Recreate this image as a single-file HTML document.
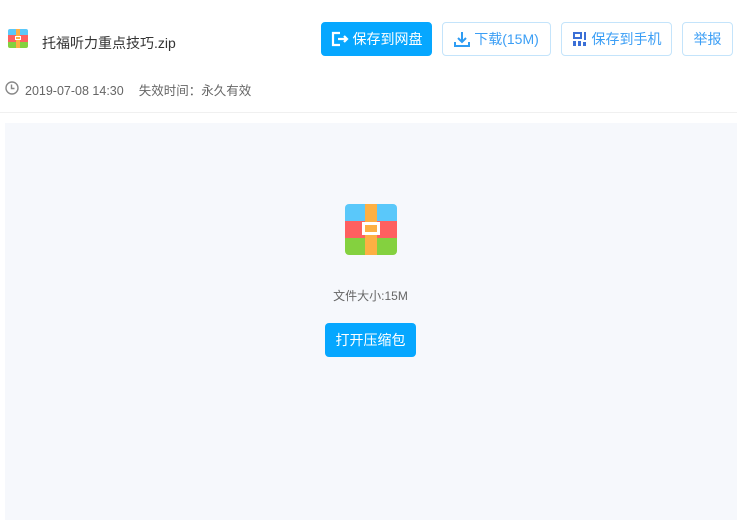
<!DOCTYPE html><html><head><meta charset="utf-8"><style>
*{margin:0;padding:0;box-sizing:border-box}
body{width:737px;height:520px;background:#fff;font-family:"Liberation Sans","Noto Sans CJK SC",sans-serif;position:relative;overflow:hidden}
.a{position:absolute}
.btn{position:absolute;top:22px;height:34px;border:1px solid #c4e4fb;border-radius:4px;color:#3b9ef5;font-size:14px;display:flex;align-items:center;justify-content:center;gap:4px;background:#fff}
</style></head><body>
<div class="a" style="left:8px;top:29px;width:20px;height:19px;border-radius:2px;overflow:hidden">
<div style="height:6px;background:#5ac8fa"></div><div style="height:7px;background:#fe6060"></div><div style="height:6px;background:#84d13f"></div>
<div class="a" style="left:8px;top:0;width:4px;height:19px;background:#fdb043"></div>
<div class="a" style="left:7px;top:7px;width:6px;height:4px;border:1px solid #fff"></div></div>
<div class="a" style="left:42px;top:33px;font-size:14px;color:#333">托福听力重点技巧.zip</div>
<div class="btn" style="left:321px;width:111px;background:#06a7ff;border-color:#06a7ff;color:#fff">
<svg width="18" height="16" viewBox="0 0 18 16"><path d="M9 2H2v12h7M7 8h9M13 5l3 3-3 3" stroke="#fff" stroke-width="2.2" fill="none"/></svg>保存到网盘</div>
<div class="btn" style="left:442px;width:109px">
<svg width="16" height="16" viewBox="0 0 16 16"><path d="M8 1v10M4 7l4 4 4-4M1 11v4h14v-4" stroke="#2e9cf3" stroke-width="2" fill="none"/></svg>下载(15M)</div>
<div class="btn" style="left:561px;width:111px">
<svg width="16" height="16" viewBox="0 0 16 16"><path d="M1 1h9v7H1zM12 1h2v8h-2zM1 10h3v5H1zM6 10h3v5H6zM11 11h3v4h-3z" fill="#3b6fd6"/><path d="M3 3h5v3H3z" fill="#fff"/></svg>保存到手机</div>
<div class="btn" style="left:682px;width:51px">举报</div>
<svg class="a" style="left:5px;top:81px" width="14" height="14" viewBox="0 0 14 14"><circle cx="7" cy="7" r="6" fill="none" stroke="#888" stroke-width="1.4"/><path d="M6.5 3.5v4h3" stroke="#888" stroke-width="1.4" fill="none"/></svg>
<div class="a" style="left:25px;top:80px;font-size:12.5px;color:#666">2019-07-08 14:30<span style="margin-left:15px">失效时间：永久有效</span></div>
<div class="a" style="left:0;top:112px;width:737px;height:1px;background:#f0f0f0"></div>
<div class="a" style="left:5px;top:123px;width:732px;height:397px;background:#f6f8fc"></div>
<div class="a" style="left:345px;top:204px;width:52px;height:51px;border-radius:4px;overflow:hidden">
<div style="height:17px;background:#5ac8fa"></div><div style="height:17px;background:#fe6060"></div><div style="height:17px;background:#84d13f"></div>
<div class="a" style="left:20px;top:0;width:12px;height:51px;background:#fdb043"></div>
<div class="a" style="left:17px;top:18px;width:18px;height:13px;border:3px solid #fff;background:#fdb043"></div></div>
<div class="a" style="left:0;width:737px;top:287px;text-align:center;font-size:12px;color:#666;padding-left:4px">文件大小:15M</div>
<div class="a" style="left:325px;top:323px;width:91px;height:34px;background:#06a7ff;border-radius:4px;color:#fff;font-size:14px;display:flex;align-items:center;justify-content:center">打开压缩包</div>
</body></html>
